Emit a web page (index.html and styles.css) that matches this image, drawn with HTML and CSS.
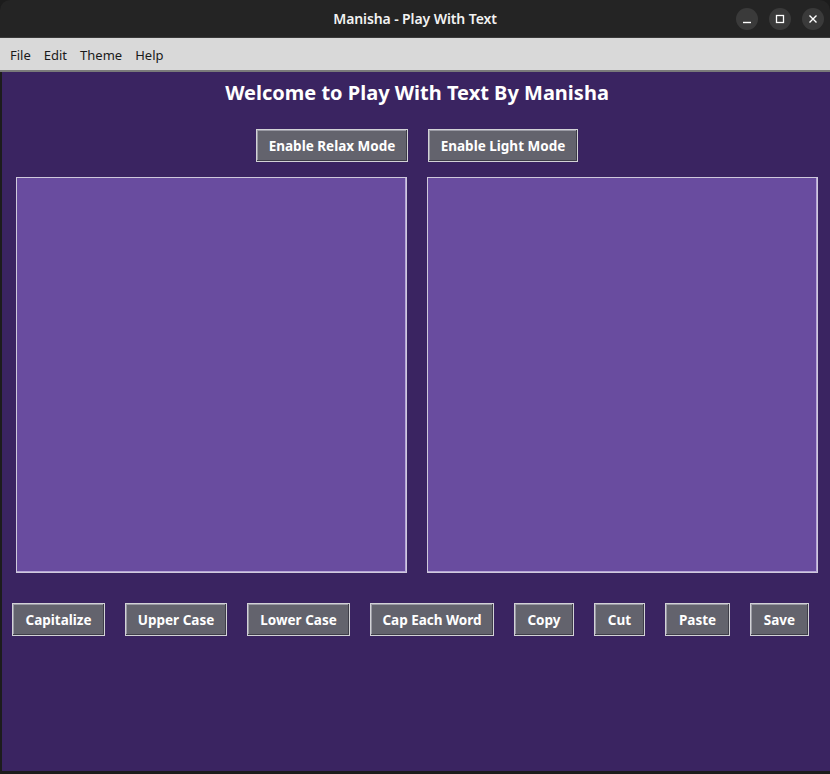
FILE: index.html
```html
<!DOCTYPE html>
<html>
<head>
<meta charset="utf-8">
<title>Manisha - Play With Text</title>
<link rel="stylesheet" href="styles.css">
</head>
<body>
<div class="window">
  <header class="titlebar">
    <div class="title">Manisha - Play With Text</div>
    <div class="controls">
      <span class="ctl"><svg width="10" height="10" viewBox="0 0 10 10"><path d="M1 8.5h8" stroke="#fff" stroke-width="1.4"/></svg></span>
      <span class="ctl"><svg width="10" height="10" viewBox="0 0 10 10"><rect x="1.5" y="1.5" width="7" height="7" fill="none" stroke="#fff" stroke-width="1.3"/></svg></span>
      <span class="ctl"><svg width="10" height="10" viewBox="0 0 10 10"><path d="M1.5 1.5l7 7M8.5 1.5l-7 7" stroke="#fff" stroke-width="1.4"/></svg></span>
    </div>
  </header>
  <nav class="menubar">
    <span class="menu">File</span>
    <span class="menu">Edit</span>
    <span class="menu">Theme</span>
    <span class="menu">Help</span>
  </nav>
  <main class="content">
    <h1 class="heading">Welcome to Play With Text By Manisha</h1>
    <div class="modes">
      <button class="btn mode-btn">Enable Relax Mode</button>
      <button class="btn mode-btn w-light">Enable Light Mode</button>
    </div>
    <div class="areas">
      <div class="area"></div>
      <div class="area"></div>
    </div>
    <div class="actions">
      <button class="btn act w-cap">Capitalize</button>
      <button class="btn act w-up">Upper Case</button>
      <button class="btn act w-low">Lower Case</button>
      <button class="btn act w-each">Cap Each Word</button>
      <button class="btn act w-copy">Copy</button>
      <button class="btn act w-cut">Cut</button>
      <button class="btn act w-paste">Paste</button>
      <button class="btn act w-save">Save</button>
    </div>
  </main>
</div>
</body>
</html>
```
FILE: styles.css
```css
html, body {
  margin: 0;
  padding: 0;
  background: #1c1c1c;
}
.window {
  width: 830px;
  height: 774px;
  display: flex;
  flex-direction: column;
  background: #1c1c1c;
  font-family: "Noto Sans", "DejaVu Sans", sans-serif;
}
.titlebar {
  height: 37px;
  flex: none;
  background: #242424;
  border-radius: 10px 10px 0 0;
  display: flex;
  align-items: center;
  justify-content: center;
  position: relative;
  border-bottom: 1px solid #3a3a3a;
}
.title {
  color: #f2f2f2;
  font-size: 14px;
  font-weight: 600;
  letter-spacing: -0.1px;
}
.controls {
  position: absolute;
  right: 6px;
  top: 8px;
  display: flex;
  gap: 11px;
}
.ctl {
  width: 22px;
  height: 22px;
  border-radius: 50%;
  background: #3a3a3a;
  display: flex;
  align-items: center;
  justify-content: center;
}
.menubar {
  flex: none;
  background: #d9d9d9;
  border-bottom: 2px solid #7a7a7a;
  display: flex;
  align-items: center;
  padding-left: 10px;
  padding-top: 1px;
  box-sizing: border-box;
  height: 34px;
  gap: 13px;
  font-size: 13px;
  color: #1a1a1a;
}
.content {
  flex: 1;
  background: #3a2461;
  margin: 0 0 3px 2px;
  display: flex;
  flex-direction: column;
  align-items: stretch;
}
.heading {
  margin: 8px 0 0;
  text-align: center;
  font-size: 20px;
  line-height: 26px;
  font-weight: 700;
  color: #ffffff;
  padding-left: 2px;
}
.modes {
  margin-top: 23px;
  display: flex;
  justify-content: center;
  gap: 20px;
  padding-left: 2px;
}
.btn {
  font-family: "Noto Sans", "DejaVu Sans", sans-serif;
  font-weight: 700;
  font-size: 13.5px;
  color: #ffffff;
  background: #63636d;
  border: 1px solid #d2d2d6;
  box-shadow: inset -1px -1px 0 #3e3e48, inset 1px 1px 0 #9a9aa4;
  height: 33px;
  padding: 0;
  margin: 0;
  box-sizing: border-box;
  white-space: nowrap;
  display: flex;
  align-items: center;
  justify-content: center;
}
.mode-btn { width: 152px; }
.mode-btn.w-light { width: 150px; }
.areas {
  margin-top: 15px;
  padding: 0 12px 0 14px;
  display: flex;
  gap: 20px;
}
.area {
  flex: 1;
  height: 396px;
  background: #694c9f;
  border: 1px solid #cfc9dc;
  box-shadow: inset -1px -1px 0 #b7a6d8;
  box-sizing: border-box;
}
.actions {
  margin-top: 30px;
  padding-left: 10px;
  display: flex;
  gap: 20px;
}
.w-cap { width: 93px; }
.w-up { width: 102px; }
.w-low { width: 103px; }
.w-each { width: 124px; }
.w-copy { width: 60px; }
.w-cut { width: 51px; }
.w-paste { width: 65px; }
.w-save { width: 59px; }
```
